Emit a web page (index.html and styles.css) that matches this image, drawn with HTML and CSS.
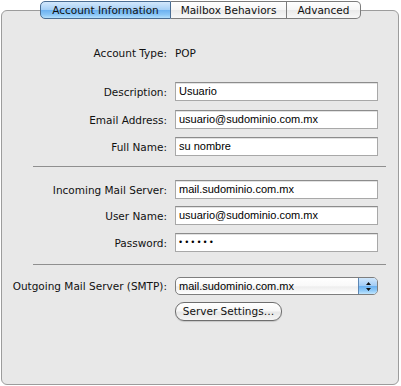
FILE: index.html
```html
<!DOCTYPE html>
<html>
<head>
<meta charset="utf-8">
<link rel="stylesheet" href="styles.css">
</head>
<body>
<div class="window">
  <div class="tabs">
    <div class="tab tab-first tab-selected">Account Information</div>
    <div class="tab tab-mid">Mailbox Behaviors</div>
    <div class="tab tab-last">Advanced</div>
  </div>
  <div class="panel">
    <div class="row row-type"><span class="label">Account Type:</span><span class="value">POP</span></div>
    <div class="row row-desc"><span class="label">Description:</span><div class="field">Usuario</div></div>
    <div class="row row-email"><span class="label">Email Address:</span><div class="field">usuario@sudominio.com.mx</div></div>
    <div class="row row-name"><span class="label">Full Name:</span><div class="field">su nombre</div></div>
    <div class="sep sep-1"></div>
    <div class="row row-incoming"><span class="label">Incoming Mail Server:</span><div class="field">mail.sudominio.com.mx</div></div>
    <div class="row row-user"><span class="label">User Name:</span><div class="field">usuario@sudominio.com.mx</div></div>
    <div class="row row-pass"><span class="label">Password:</span><div class="field field-pass">••••••</div></div>
    <div class="sep sep-2"></div>
    <div class="row row-smtp"><span class="label">Outgoing Mail Server (SMTP):</span>
      <div class="popup"><span class="popup-text">mail.sudominio.com.mx</span>
        <span class="popup-arrows">
          <svg width="7" height="11" viewBox="0 0 7 11"><path d="M3.5 1 L6 4 L1 4 Z M3.5 10 L6 7 L1 7 Z" fill="#111"/></svg>
        </span>
      </div>
    </div>
    <div class="row row-button"><span class="label"></span><div class="button">Server Settings…</div></div>
  </div>
</div>
</body>
</html>
```
FILE: styles.css
```css
html, body {
  margin: 0;
  padding: 0;
  background: #ffffff;
}
body {
  font-family: "DejaVu Sans", sans-serif;
  font-size: 10.5px;
  color: #111;
}
.window {
  width: 401px;
  height: 386px;
  padding-top: 1px;
  box-sizing: border-box;
}
.tabs {
  display: flex;
  margin-left: 40px;
  width: 321px;
  height: 18px;
  position: relative;
  z-index: 2;
}
.tab {
  box-sizing: border-box;
  height: 18px;
  line-height: 16px;
  text-align: center;
  border: 1px solid #7c7c7c;
  border-left: none;
  background: linear-gradient(#ffffff 0%, #f6f6f6 50%, #eaeaea 52%, #f8f8f8 100%);
  white-space: nowrap;
}
.tab-first {
  width: 131px;
  border-left: 1px solid #4a6d93;
  border-radius: 5px 0 0 5px;
}
.tab-mid { width: 116px; }
.tab-last {
  width: 74px;
  border-radius: 0 5px 5px 0;
}
.tab-selected {
  border-color: #4a6d93;
  background: linear-gradient(#d3e8fc 0%, #a7d0f6 48%, #6cb2f1 52%, #8ac6f7 80%, #b4e0fd 100%);
}
.panel {
  box-sizing: border-box;
  margin: -9px 0 0 1px;
  width: 398px;
  height: 375px;
  border: 1px solid #9c9c9c;
  border-radius: 6px;
  background: #e8e8e8;
  padding-top: 32px;
  position: relative;
  z-index: 1;
}
.row {
  display: grid;
  grid-template-columns: 165px 203px;
  column-gap: 8px;
  align-items: center;
  height: 19px;
}
.label {
  text-align: right;
  white-space: nowrap;
}
.value {
  white-space: nowrap;
}
.row-desc { margin-top: 20px; }
.row-email { margin-top: 9px; }
.row-name { margin-top: 8px; }
.row-incoming { margin-top: 13px; }
.row-user { margin-top: 7px; }
.row-pass { margin-top: 8px; }
.row-smtp { margin-top: 12px; height: 18px; }
.row-button { margin-top: 7px; height: 19px; }
.sep {
  height: 1px;
  background: #8f8f8f;
  margin-left: 31px;
  width: 353px;
}
.sep-1 { margin-top: 10px; }
.sep-2 { margin-top: 12px; }
.field {
  box-sizing: border-box;
  height: 19px;
  background: #fff;
  border: 1px solid #a8a8a8;
  border-top-color: #8c8c8c;
  box-shadow: inset 0 1px 0 #e2e2e2;
  font-family: "Liberation Sans", sans-serif;
  font-size: 11px;
  line-height: 17px;
  padding-left: 3px;
  white-space: nowrap;
  color: #000;
}
.field-pass {
  font-size: 9px;
  letter-spacing: 3px;
}
.popup {
  box-sizing: border-box;
  height: 18px;
  display: flex;
  border: 1px solid #7e7e7e;
  border-radius: 5px;
  background: linear-gradient(#ffffff 0%, #f9f9f9 50%, #ededed 55%, #ffffff 100%);
  overflow: hidden;
  font-family: "Liberation Sans", sans-serif;
  font-size: 11px;
  line-height: 16px;
  color: #000;
}
.popup-text {
  flex: 1;
  padding-left: 3px;
  white-space: nowrap;
}
.popup-arrows {
  width: 18px;
  display: flex;
  align-items: center;
  justify-content: center;
  border-left: 1px solid #5d86b3;
  background: linear-gradient(#d0e7fc 0%, #a3cdf6 48%, #6cb2f1 52%, #92cbf8 80%, #c2e6fe 100%);
}
.popup-arrows svg { display: block; }
.button {
  box-sizing: border-box;
  width: 107px;
  height: 19px;
  border: 1px solid #6e6e6e;
  border-radius: 9px;
  background: linear-gradient(#ffffff 0%, #f7f7f7 48%, #e6e6e6 52%, #f5f5f5 100%);
  text-align: center;
  line-height: 17px;
  white-space: nowrap;
  box-shadow: 0 1px 1px rgba(0,0,0,0.15);
}
```
